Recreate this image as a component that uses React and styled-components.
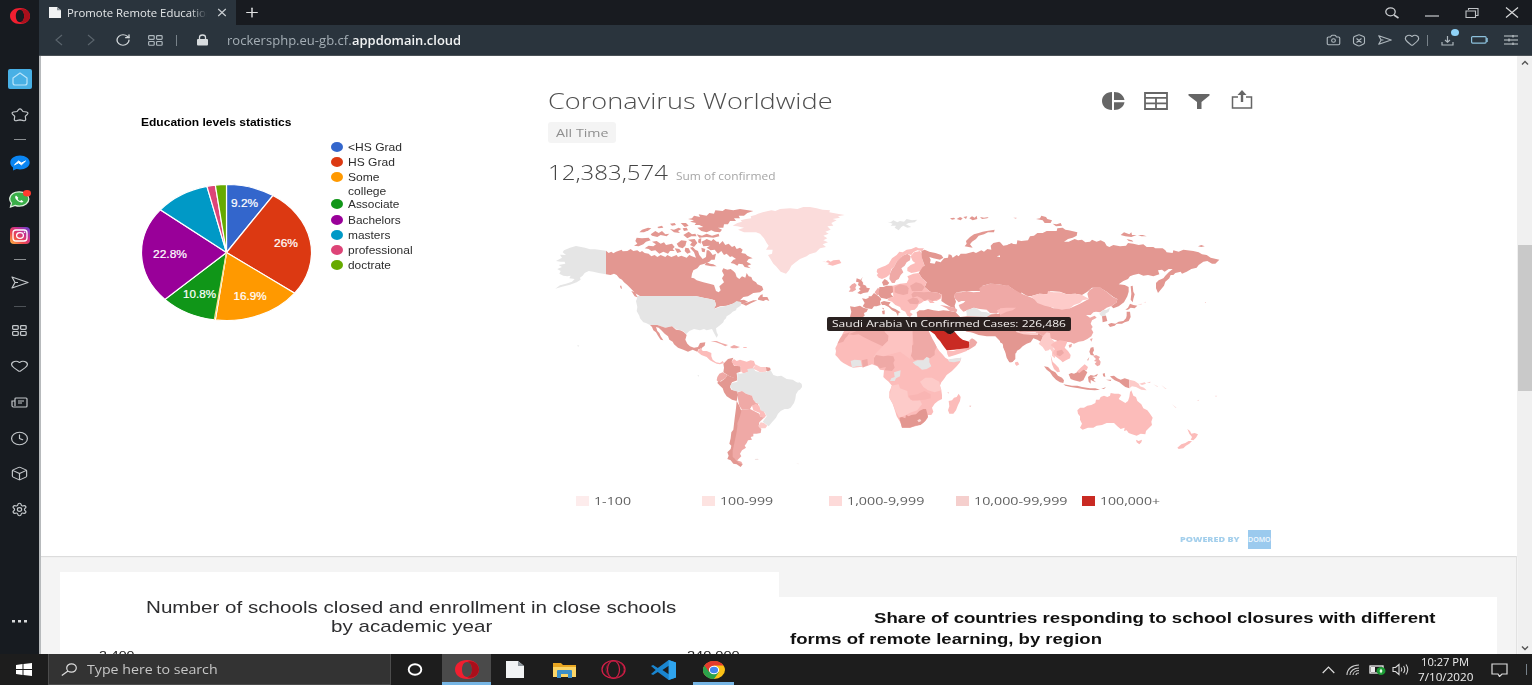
import React, { useLayoutEffect, useRef, useState } from 'react';
import styled, { createGlobalStyle, css } from 'styled-components';
import { X, Plus, RotateCw, Camera, Heart, Clock, Box, Settings } from 'lucide-react';

const Global = createGlobalStyle`
  * { box-sizing: border-box; }
  body { margin: 0; background: #fff; overflow: hidden; }
`;

const ui = '"Open Sans", "Noto Sans", sans-serif';
const arial = '"Liberation Sans", Arial, sans-serif';

/* Text that is condensed or expanded horizontally to fill a given width */
const FitBox = styled.span`
  display: block;
  flex: none;
  width: ${(p) => p.$w}px;
  height: ${(p) => p.$lh || p.$size * 1.3}px;
  line-height: ${(p) => p.$lh || p.$size * 1.3}px;
  font-family: ${(p) => p.$font || ui};
  font-size: ${(p) => p.$size}px;
  font-weight: ${(p) => p.$weight || 400};
  color: ${(p) => p.$color || 'inherit'};
  white-space: pre;
`;
const FitInner = styled.span`
  display: inline-block;
  transform-origin: 0 50%;
`;
function Fit({ w, size, lh, font, weight, color, children }) {
  const ref = useRef(null);
  const [k, setK] = useState(1);
  useLayoutEffect(() => {
    setK(w / ref.current.offsetWidth);
  }, [w, children]);
  return (
    <FitBox $w={w} $size={size} $lh={lh} $font={font} $weight={weight} $color={color}>
      <FitInner ref={ref} style={{ transform: `scaleX(${k})` }}>{children}</FitInner>
    </FitBox>
  );
}

const Screen = styled.div`
  width: 1532px;
  height: 685px;
  display: flex;
  flex-direction: column;
  overflow: hidden;
`;
const Browser = styled.div`
  display: flex;
  height: 654px;
  background: #181b20;
`;
const Side = styled.nav`
  width: 39px;
  height: 654px;
  display: flex;
  flex-direction: column;
  align-items: center;
  background: #171b20;
  color: #c3c7ca;
`;
const SideItem = styled.div`
  width: 39px;
  height: ${(p) => p.$h || 36}px;
  display: flex;
  align-items: center;
  justify-content: center;
  margin-bottom: ${(p) => p.$mb || 0}px;
  margin-top: ${(p) => (p.$push ? 'auto' : 0)};
`;
const Dash = styled.i`
  width: 12px;
  height: 1px;
  background: ${(p) => (p.$dim ? '#4d5257' : '#8b8f92')};
`;
const HomeTile = styled.div`
  width: 24px;
  height: 20px;
  border-radius: 2px;
  background: #48b0e5;
  display: flex;
  align-items: center;
  justify-content: center;
`;
const Column = styled.div`
  flex: 1;
  display: flex;
  flex-direction: column;
`;
const TabBar = styled.div`
  height: 25px;
  display: flex;
  align-items: center;
  background: #181b20;
`;
const Tab = styled.div`
  width: 197px;
  height: 25px;
  padding: 0 7px 0 10px;
  display: flex;
  align-items: center;
  background: #2a343d;
  color: #e4e7e9;
  & > svg { flex: none; }
`;
const TabTitle = styled.div`
  width: 146px;
  margin-left: 6px;
  margin-right: 5px;
  overflow: hidden;
  mask-image: linear-gradient(90deg, #000 86%, transparent 98%);
`;
const Slot = styled.div`
  width: ${(p) => p.$w}px;
  flex: none;
  height: 100%;
  display: flex;
  align-items: center;
  justify-content: center;
  position: relative;
`;
const Spacer = styled.div`flex: 1;`;
const AddressBar = styled.div`
  height: 31px;
  display: flex;
  align-items: center;
  background: #2a343d;
  border-bottom: 1px solid #4a5156;
  color: #aeb7bd;
`;
const Divider = styled.i`
  width: 1px;
  height: 11px;
  background: #78828a;
`;
const UpdateDot = styled.i`
  position: absolute;
  left: 21px;
  top: 4px;
  width: 8px;
  height: 7px;
  border-radius: 50%;
  background: #8fd2f6;
`;
const Url = styled.div`display: flex; margin-left: 7px;`;
const View = styled.div`
  height: 598px;
  display: flex;
  background: #f4f4f4;
  border-left: 2px solid #b7babc;
`;
const Page = styled.main`
  width: 1477px;
  height: 598px;
  overflow: hidden;
`;
const StatsCard = styled.section`
  width: 1476px;
  height: 500px;
  display: flex;
  padding-left: 100px;
  background: #fff;
  box-shadow: 0 1px 1px #dcdcdc;
`;
const Scroll = styled.div`
  width: 14px;
  display: flex;
  flex-direction: column;
  align-items: center;
  background: #f0f0f0;
  padding: 4px 0 3px;
`;
const Thumb = styled.div`
  width: 14px;
  height: 146px;
  margin: 180px 0 auto;
  background: #c9c9c9;
`;
const Education = styled.div`
  width: 407px;
  padding-top: 59px;
`;
const PieRow = styled.div`display: flex; margin-top: 9px;`;
const PieSvg = styled.svg`margin-top: 45px; flex: none;`;
const Legend = styled.div`margin: 1px 0 0 19px;`;
const LegendItem = styled.div`
  display: flex;
  min-height: 15.2px;
  color: #2d2d2d;
`;
const Swatch = styled.i`
  width: 12px;
  height: 10px;
  margin: 2px 5px 0 0;
  border-radius: 50%;
  background: ${(p) => p.$c};
`;
const Corona = styled.div`
  width: 723px;
  padding-top: 31px;
`;
const CoronaHead = styled.div`
  display: flex;
  justify-content: space-between;
  padding-right: 17px;
  height: 35px;
`;
const Tools = styled.div`
  display: flex;
  align-items: center;
  height: 27px;
  gap: 19px;
  color: #666;
`;
const Range = styled.div`
  width: 68px;
  height: 21px;
  padding: 0 8px;
  display: flex;
  align-items: center;
  border-radius: 3px;
  background: #f4f4f4;
`;
const Total = styled.div`
  display: flex;
  align-items: baseline;
  gap: 8px;
  height: 30px;
  margin-top: 15px;
`;
const MapWrap = styled.div`
  position: relative;
  width: 700px;
  height: 280px;
  margin: 7px 0 0 -8px;
`;
const Tooltip = styled.div`
  position: absolute;
  left: 287px;
  top: 122px;
  width: 244px;
  height: 14px;
  padding: 0 0 1px 5px;
  display: flex;
  align-items: center;
  border-radius: 2px;
  background: rgba(35, 27, 26, 0.97);
`;
const MapLegend = styled.div`
  display: flex;
  height: 18px;
  margin: 17px 0 0 27.5px;
`;
const MapKey = styled.div`
  width: 126.7px;
  display: flex;
  align-items: center;
`;
const Square = styled.i`
  width: 13px;
  height: 10px;
  margin-right: 5px;
  background: ${(p) => p.$c};
`;
const Powered = styled.div`
  display: flex;
  justify-content: flex-end;
  align-items: center;
  margin-top: 20px;
  gap: 8px;
`;
const Domo = styled.div`
  width: 23px;
  height: 19px;
  display: flex;
  align-items: center;
  background: #9bcaee;
`;
const Lower = styled.section`
  display: flex;
  align-items: flex-start;
  width: 1476px;
  height: 98px;
  padding: 16px 0 0 19px;
  border-right: 1px solid #e2e2e2;
`;
const Closed = styled.div`
  width: 719px;
  height: 82px;
  padding-top: 26px;
  display: flex;
  flex-direction: column;
  background: #fff;
`;
const Line = styled.div`
  display: flex;
  padding-left: ${(p) => p.$x}px;
  gap: ${(p) => p.$gap || 0}px;
  margin-top: ${(p) => p.$mt || 0}px;
`;
const Share = styled.div`
  width: 718px;
  height: 57px;
  margin-top: 25px;
  padding-top: 11px;
  background: #fff;
`;
const Taskbar = styled.footer`
  height: 31px;
  display: flex;
  background: #1d1d1d;
  color: #eee;
`;
const SearchBox = styled.div`
  width: 343px;
  height: 31px;
  display: flex;
  align-items: center;
  padding-left: 12px;
  gap: 10px;
  background: #333;
  border: 1px solid #4c4c4c;
  border-top: 0;
`;
const TaskItem = styled.div`
  width: ${(p) => p.$w}px;
  height: 31px;
  display: flex;
  align-items: center;
  justify-content: center;
  ${(p) => p.$active && css`background: #4a4a4a;`}
  ${(p) => p.$open && css`box-shadow: inset 0 -3px #76b5e4;`}
`;
const TimeBox = styled.div`
  width: 68px;
  display: flex;
  flex-direction: column;
  align-items: center;
  padding-top: 1px;
`;

const L = ({ as: C, w, h, s = 1.5, ...r }) => (
  <C width={w} height={h} strokeWidth={s} preserveAspectRatio="none" {...r} />
);
const Svg = ({ w, h, vb, children }) => (
  <svg width={w} height={h} viewBox={vb || `0 0 ${w} ${h}`} preserveAspectRatio="none" fill="none">{children}</svg>
);

const OperaMark = ({ w, h }) => (
  <Svg w={w} h={h} vb="0 0 24 20">
    <path fillRule="evenodd" fill="#f01f30" d="M12 0C5 0 0 4.300 0 10s5 10 12 10 12-4.300 12-10S19 0 12 0zm0 2.200c3 0 5 3.300 5 7.800s-2 7.800-5 7.800-5-3.300-5-7.800 2-7.800 5-7.800z" />
    <path fill="#a90f1b" d="M12 2.200c2-1.500 5-1.200 7.600.4C22.300 4.300 24 6.900 24 10s-1.700 5.700-4.400 7.400c-2.600 1.600-5.600 1.900-7.600.4 3 0 5-3.300 5-7.800s-2-7.800-5-7.800z" />
  </Svg>
);
const Grid4 = ({ w, h, s = 1.2 }) => (
  <Svg w={w} h={h} vb="0 0 14 11">
    <g stroke="currentColor" strokeWidth={s}>
      <rect x=".6" y=".6" width="5.200" height="3.800" rx=".8" /><rect x="8" y=".6" width="5.200" height="3.800" rx=".8" />
      <rect x=".6" y="6.500" width="5.200" height="3.800" rx=".8" /><rect x="8" y="6.500" width="5.200" height="3.800" rx=".8" />
    </g>
  </Svg>
);
const PageIcon = ({ w, h }) => (
  <Svg w={w} h={h} vb="0 0 12 12"><path d="M0 0h8l4 3.500V12H0z" fill="#f1f3f4" /><path d="M8 0v3.500h4z" fill="#8d959b" /></Svg>
);
const SendIcon = ({ w, h, s = 1.2 }) => (
  <Svg w={w} h={h} vb="0 0 18 13"><path d="M1 1l16 5.500L1 12l3-5.500zM4 6.500h3" stroke="currentColor" strokeWidth={s} strokeLinejoin="round" /></Svg>
);

const slices = [
  [0, 9.2, '#3366cc'], [9.2, 35.2, '#dc3912'], [35.2, 52.1, '#ff9900'], [52.1, 62.9, '#109618'],
  [62.9, 85.8, '#990099'], [85.8, 96.3, '#0099c6'], [96.3, 97.9, '#dd4477'], [97.9, 100, '#66aa00'],
];
const at = (pct) => {
  const a = (pct / 100) * Math.PI * 2;
  return `${(85.5 + 85 * Math.sin(a)).toFixed(2)} ${(68.5 - 68 * Math.cos(a)).toFixed(2)}`;
};
const pieLabels = [[90, 23, 27, '9.2%'], [133, 63, 24, '26%'], [92.500, 116, 33, '16.9%'], [42, 114, 33, '10.8%'], [12, 73.500, 34, '22.8%']];

function Pie() {
  return (
    <PieSvg width="171" height="137" viewBox="0 0 171 137">
      {slices.map(([a, b, c]) => (
        <path key={c} d={`M85.500 68.500L${at(a)}A85 68 0 0 1 ${at(b)}Z`} fill={c} stroke="#fff" strokeWidth="1.200" />
      ))}
      <path d={`M85.500 68.500L${at(52.3)}`} stroke="#ffdf8a" strokeWidth="1.200" />
      {pieLabels.map(([x, y, w, t]) => (
        <text key={t} x={x} y={y} textLength={w} lengthAdjust="spacingAndGlyphs" fill="#fff" fontFamily="Liberation Sans, sans-serif" fontSize="10.500" stroke="#fff" strokeWidth=".2">{t}</text>
      ))}
    </PieSvg>
  );
}

const R = '#e39791';
const M = '#efa9a6';
const P = '#fcbcba';
const Q = '#fdcbc9';
const F = '#fbdcdb';
const G = '#e5e5e5';

/* Land shapes of the three map sections: colour followed by outline points */
const americas = [
  [G, '198,167 165,163 150,163 135,158 108,153 90,158 72,166 68,172 78,180 60,179 66,188 48,198 62,200 74,200 76,206 56,210 66,216 52,222 62,228 58,236 70,242 82,244 92,242 88,250 104,252 96,260 78,266 60,271 46,281 66,275 90,269 110,262 122,254 120,248 128,242 134,234 146,228 160,230 176,234 198,238'],
  [R, '198,167 206,174 214,170 220,175 228,170 245,164 248,169 262,168 272,162 280,168 292,166 300,172 306,168 314,174 326,176 334,184 344,180 352,186 362,180 376,186 382,180 394,186 410,180 414,186 424,182 440,188 448,180 456,184 468,188 462,172 450,158 458,156 466,164 474,168 478,180 488,192 498,186 500,166 506,166 512,172 518,180 528,176 524,194 514,194 508,200 494,206 480,210 472,220 460,226 456,236 454,248 462,250 470,256 490,262 508,266 522,270 528,288 536,292 542,286 538,274 552,262 546,250 552,240 546,228 550,220 562,224 572,222 580,228 586,234 590,246 598,252 606,244 616,248 620,234 626,244 634,246 638,256 648,262 652,268 666,274 670,284 660,292 640,294 624,304 610,306 600,316 612,314 624,320 606,328 598,320 578,326 560,332 540,334 520,342 528,330 524,316 510,312 490,308 470,304 300,303 288,296 276,284 268,276 262,270 252,262 246,254 238,250 230,240 222,236 212,240 198,238'],
  [R, '606,326 618,332 634,324 652,316 640,316 624,322'], [R, '654,310 662,300 668,298 668,306 682,306 688,318 678,314 670,318 654,314'],
  [R, '274,288 286,292 290,302 296,308 284,304'], [R, '240,272 244,272 246,282 242,280'],
  [R, '484,140 494,136 500,132 514,138 520,132 530,140 536,140 538,148 548,138 556,150 566,146 576,156 584,152 590,162 600,158 608,164 604,174 616,176 622,182 638,190 626,192 620,200 634,208 622,212 632,220 614,216 608,208 596,206 592,212 582,206 572,204 580,194 588,192 576,184 570,186 560,176 552,180 544,168 534,176 524,164 512,166 500,158 510,152 490,154'],
  [R, '494,210 500,202 510,206 520,208 530,214 514,214'], [R, '528,156 546,152 554,160 540,166'],
  [R, '314,160 326,152 340,154 348,148 336,140 350,138 362,146 372,142 378,150 396,146 404,156 398,162 404,168 390,168 384,176 370,170 358,176 346,166 334,168 326,162'],
  [R, '282,152 292,146 286,138 290,128 306,130 326,128 332,136 318,140 310,148 296,154'],
  [R, '410,146 424,136 440,138 436,152 428,160 416,156'], [R, '444,134 464,132 472,144 462,156 450,150 456,142'], [R, '476,132 484,130 482,146 474,142'],
  [R, '404,160 418,162 424,170 412,174'], [R, '436,158 446,160 452,172 442,176 434,168'], [R, '484,158 496,162 494,172 486,170'],
  [R, '298,112 306,104 324,98 334,100 326,106 312,112'], [R, '332,118 346,108 356,114 366,108 376,118 388,116 380,124 362,120 352,126 336,122'],
  [R, '352,96 366,92 370,98 356,100'], [R, '390,86 404,84 408,90 396,92'], [R, '390,102 402,104 416,98 424,102 414,108 420,114 402,112'],
  [R, '422,84 438,84 446,92 434,96'], [R, '428,100 440,98 444,106 432,108'], [R, '430,120 446,110 456,118 466,116 470,124 454,124 442,130'],
  [R, '470,118 486,122 500,116 516,122 536,116 538,124 520,128 500,126 478,128'],
  [R, '444,72 456,70 462,62 480,66 476,58 500,62 508,54 522,56 526,46 548,48 556,42 580,46 600,42 640,48 622,54 612,62 596,62 600,70 582,70 588,78 570,78 564,88 552,88 550,98 534,98 546,104 540,112 524,110 514,106 500,112 484,108 472,98 490,96 478,90 464,90 468,84 450,80 462,76'],
  [F, '592,84 606,80 602,76 618,72 634,70 632,64 646,60 654,56 668,52 694,46 706,48 720,42 750,40 772,42 790,36 810,36 830,40 848,44 870,46 868,52 892,56 914,60 894,64 900,68 878,72 890,76 874,84 880,92 862,94 872,104 856,110 866,116 850,122 862,130 850,136 864,142 848,148 858,156 840,160 828,172 808,178 800,184 780,192 764,204 754,212 748,224 738,236 722,230 708,214 700,206 690,190 684,180 696,176 698,164 678,164 686,152 680,144 672,130 660,116 648,112 630,112 612,112 594,104 612,98 592,94 578,92'],
  [G, '294,303 455,303 470,304 490,308 510,312 524,316 528,330 522,342 540,336 560,332 578,326 590,318 604,322 602,332 590,340 588,346 578,350 570,358 560,364 558,370 552,376 550,382 538,392 528,400 530,412 534,420 530,428 522,414 516,402 500,406 492,402 480,406 462,402 448,408 438,418 430,408 420,406 408,402 396,394 376,398 352,390 330,390 318,384 310,382 300,370 298,362 290,348 292,336 288,318'],
  [R, '330,390 352,390 376,398 396,394 408,404 420,406 430,410 440,420 436,434 442,446 450,454 462,458 474,456 480,444 496,442 494,452 486,458 484,462 476,462 472,470 458,464 444,470 430,464 414,458 402,448 398,440 388,434 384,424 374,416 364,406 356,398 348,396 352,408 358,414 362,424 370,436 362,434 354,422 348,412 340,406 336,396'],
  [P, '472,470 482,458 488,468 500,468 514,474 514,484 518,494 528,502 540,504 548,498 552,504 540,508 530,506 518,500 510,496 500,486 484,480'],
  [M, '512,438 530,438 544,444 552,446 564,450 556,454 544,448 528,442'], [M, '570,456 582,450 592,454 600,456 590,460 576,460'], [P, '610,456 620,456 620,459 610,459'],
  [R, '550,506 556,500 564,492 580,488 576,498 582,512 602,514 602,530 590,534 592,552 574,546 566,542 550,532 552,518'],
  [P, '574,500 582,492 590,498 600,494 620,500 632,496 642,498 646,510 640,516 642,522 628,522 624,530 612,536 604,530 602,514 584,512'],
  [Q, '646,508 662,516 678,516 678,530 660,532 650,526 640,522'], [R, '678,516 690,518 692,524 686,530 679,528'],
  [M, '532,546 538,536 548,532 562,540 556,550 542,558 540,566 530,556'],
  [R, '562,540 574,546 590,548 592,556 576,562 570,576 574,584 592,588 594,600 590,618 576,614 560,604 552,592 548,580 540,572 532,564 534,560 542,560 556,550'],
  [G, '592,534 600,536 612,534 624,530 622,522 640,520 646,528 660,532 680,530 692,526 700,540 712,544 724,542 740,552 758,554 770,562 784,566 786,576 774,588 768,598 766,612 762,624 752,638 744,642 734,642 722,648 714,656 708,668 696,682 686,694 676,686 668,680 680,664 674,652 662,648 660,636 656,626 646,622 640,614 636,602 618,596 606,588 594,590 578,586 570,574 576,564 592,560'],
  [M, '594,592 606,588 618,596 636,602 640,614 648,624 656,626 652,632 636,632 630,642 606,644 598,632 594,612'],
  [P, '636,632 648,626 658,632 662,646 672,650 678,662 672,670 658,662 660,654 640,646'],
  [M, '604,644 630,642 658,656 660,664 672,668 658,682 656,694 664,702 662,714 650,716 640,716 640,724 632,726 636,734 624,736 620,744 614,752 618,758 606,766 600,776 604,784 592,796 574,790 576,768 582,740 588,708 594,676 598,656'],
  [R, '590,618 598,632 604,648 600,664 594,680 590,710 584,740 578,768 578,786 590,796 596,800 608,808 602,816 590,808 580,806 572,796 562,792 566,782 562,772 572,762 574,752 568,746 572,730 574,712 580,704 584,670 588,640'],
  [Q, '656,692 662,682 672,684 682,692 676,700 660,700'],
  [M, '590,796 604,800 608,808 596,804'],
  ['#f3e3e2', '644,792 654,791 656,795 646,795'], [G, '112,450 118,452 114,455'], [G, '472,541 477,541 476,545'], ['#f3e3e2', '768,804 776,806 776,808'],
];
const centre = [
  [G, '262,80 272,82 280,76 292,82 300,78 312,80 320,72 336,76 352,74 344,82 326,84 318,88 334,96 322,98 310,92 304,96 296,106 284,98 288,92 272,92 278,86'],
  [P, '66,198 76,202 84,196 92,200 100,196 118,194 124,204 112,208 98,212 82,208 88,204'],
  [P, '230,240 234,236 230,230 232,222 246,216 256,212 266,206 276,190 290,180 298,170 308,172 320,164 334,162 348,156 356,160 372,160 366,168 352,166 340,172 334,180 320,176 306,184 300,192 290,200 282,216 274,222 270,238 260,246 246,252 236,248'],
  [M, '268,252 270,236 276,222 282,216 290,200 302,188 308,182 322,176 332,184 330,196 320,202 314,212 304,220 310,232 302,240 296,252 288,256 284,264 276,264'],
  [P, '332,184 342,172 360,168 366,176 366,190 374,214 362,228 346,232 334,234 322,228 322,218 332,210 346,204 338,198'],
  [R, '364,168 374,164 388,170 406,174 424,180 430,188 420,194 400,190 388,186 392,194 390,204 404,206 408,198 422,202 432,190 444,188 446,178 454,180 458,188 470,180 476,184 482,176 498,176 520,170 528,174 544,166 552,170 562,162 574,164 572,152 580,144 598,140 604,146 602,158 608,166 604,180 590,184 606,188 614,180 614,164 622,172 632,182 638,176 626,164 640,164 636,152 622,150 632,146 650,148 652,140 664,142 664,300 630,276 600,268 570,266 548,272 540,288 500,288 470,292 462,302 468,320 464,332 466,340 452,336 436,326 424,318 426,300 416,294 390,290 374,276 380,262 366,250 356,234 368,216 374,212 366,190'],
  [R, '494,154 500,146 498,138 510,126 522,118 536,114 548,110 560,108 584,104 582,112 564,112 552,118 536,122 528,132 516,140 510,148 518,158 506,156'],
  [R, '450,70 462,68 466,72 456,74'], [R, '470,72 480,66 488,70 482,76'], [R, '490,66 502,64 498,72'], [R, '508,70 516,64 524,68 530,62 532,72 518,76'], [R, '540,66 552,68 566,66 562,70 546,72'], [M, '640,68 650,68 648,71'],
  [R, '170,250 182,254 188,246 184,256 190,264 188,268 198,272 200,278 210,280 204,292 190,294 182,298 172,294 182,286 176,282 182,276 174,270 176,262 168,260'],
  [M, '148,276 156,268 164,264 170,270 166,278 168,284 158,290 146,290 152,282'],
  [R, '150,334 164,336 180,332 190,338 204,342 200,350 192,354 194,362 184,370 168,374 156,370 150,366 154,350'],
  [R, '186,310 198,312 206,308 206,304 214,304 222,294 236,304 244,312 240,320 242,330 230,334 222,334 216,342 198,340 188,334 194,324'],
  [M, '224,292 234,278 240,284 236,300 230,300'],
  [R, '238,276 250,276 260,272 278,272 282,290 272,296 280,306 260,312 242,308 236,300'], [R, '246,262 254,252 260,256 268,264 262,270 250,272'],
  [R, '242,322 252,318 262,320 272,322 266,330 276,338 286,342 302,352 296,354 294,364 288,352 276,346 266,336 254,330 246,330'], [R, '246,338 252,340 250,344'], [R, '246,348 254,346 254,358 248,358'],
  [P, '278,272 300,266 320,264 326,252 322,244 340,236 356,234 366,250 380,262 374,276 390,290 416,294 426,300 424,310 410,318 398,318 404,324 390,324 384,316 372,318 364,324 356,328 352,336 344,344 332,346 330,352 338,358 330,366 322,362 316,350 304,344 300,336 286,330 276,320 262,316 268,308 280,306'],
  [M, '284,276 300,268 320,272 326,280 324,296 310,300 294,296 284,292'], [M, '334,298 342,290 372,292 390,290 416,294 424,302 418,312 404,316 398,318 384,312 374,318 364,310 352,304 338,308'],
  [M, '322,316 338,308 352,310 358,320 352,328 330,326'], [M, '330,272 348,262 364,266 374,276 366,288 336,288'],
  [R, '350,352 358,346 372,346 384,342 400,346 416,348 430,346 450,348 466,352 480,366 352,366'],
  [M, '420,330 436,332 452,336 464,338 472,344 468,354 462,350 450,348 440,340'],
  [M, '464,310 462,300 470,292 484,292 500,288 520,292 540,290 538,280 548,272 570,266 600,268 630,276 664,296 664,340 640,336 620,340 600,346 590,356 570,354 560,344 540,342 520,338 508,344 490,350 480,340 476,330 490,324 496,318 484,318 476,322'],
  [G, '498,346 510,342 524,338 536,344 544,350 560,352 574,358 566,368 500,368 500,356'],
  [P, '590,346 610,338 650,336 660,344 620,356 600,360'],
  [R, '466,352 480,366 500,364 560,366 574,358 600,356 664,362 664,440 650,446 648,458 650,472 642,478 644,492 636,502 628,502 620,488 616,472 610,458 608,444 602,440 594,432 586,424 560,424 536,420 520,414 512,412 500,410 480,398 380,396 380,366'],
  [P, '130,412 134,406 150,398 160,396 200,388 250,386 262,400 300,406 320,402 340,404 384,404 396,430 404,444 410,456 418,468 426,476 436,488 446,494 460,492 484,488 480,502 470,514 456,528 440,540 432,552 424,562 420,572 424,586 426,600 426,612 414,618 404,626 396,638 400,650 394,660 384,660 382,670 370,684 352,692 330,698 306,698 302,684 290,664 284,644 278,626 268,608 268,590 276,572 266,560 256,552 250,546 252,526 240,524 232,514 216,508 200,514 180,516 160,518 148,514 130,504 122,498 112,486 106,480 108,468 106,460 112,448 122,428'],
  [M, '112,446 120,430 130,418 150,412 142,424 136,430 130,440 118,444'],
  [M, '146,418 170,408 184,398 250,388 254,410 266,422 264,438 248,454 232,446 214,438 190,426 176,418 160,420'],
  [M, '338,408 384,404 396,430 404,444 410,456 404,468 404,480 390,490 380,486 370,494 350,494 342,496 336,486 328,478 330,460 340,448'],
  ['#fdc3c1', '254,410 266,422 264,438 248,454 228,474 220,486 250,484 300,470 330,492 336,470 336,410'],
  [M, '222,490 228,480 250,484 264,482 280,484 284,496 280,504 284,518 276,528 254,526 258,516 240,520 232,512 222,508'],
  [M, '186,496 202,492 204,510 188,518'],
  [G, '152,498 164,494 182,496 186,514 170,514 156,518'], [G, '338,502 352,496 370,496 380,486 388,490 388,502 394,514 380,522 366,524 354,514 346,510'],
  [G, '444,496 452,492 484,488 480,498 462,502 448,500'], [G, '282,532 302,526 300,544 288,550 284,558 270,558 274,550 284,546'],
  [Q, '360,560 376,548 396,548 418,560 420,572 424,586 404,592 384,586 370,576'],
  [Q, '274,572 296,568 300,580 322,588 324,606 338,618 360,616 366,628 352,646 334,652 318,660 298,668 288,650 278,626 268,608'],
  ['#f9b5b3', '326,602 352,598 374,588 392,598 392,610 374,614 352,616 332,614'],
  [R, '298,668 306,666 316,670 318,660 326,664 334,660 348,658 358,648 370,642 378,642 382,656 384,666 376,678 362,690 346,692 330,698 306,698 302,684'], ['#fdd8d6', '352,676 360,672 364,678 356,682'],
  [P, '446,618 456,616 462,608 470,606 476,596 482,606 480,618 474,630 468,646 460,656 448,656 444,646 448,634'],
  [P, '440,466 460,468 478,462 496,456 506,460 500,468 484,474 466,480 446,486 442,478'],
  [M, '508,436 516,430 524,434 532,442 526,452 514,460 504,466 494,462 506,456 510,446'],
  ['#c92a23', '390,408 432,406 450,418 464,410 472,420 480,428 488,434 508,440 508,450 506,458 480,462 462,464 440,466 434,458 428,450 420,438 412,430 404,418'],
  ['#241514', '424,404 466,404 462,412 452,418 444,416 436,410'],
  [G, '-4,560 4,566 6,574 0,584 -4,584'], [P, '442,592 446,592 446,596'], [M, '508,632 514,632 510,636'], [P, '646,502 654,500 656,508 650,512 646,508'],
];
const asia = [
  [R, '0,142 10,152 22,150 36,144 40,150 50,150 52,136 64,138 84,136 90,124 102,122 112,114 128,114 140,108 170,108 172,100 188,98 196,104 206,106 216,108 232,112 230,122 218,128 204,132 192,140 206,140 224,132 234,136 246,134 256,142 270,140 276,134 290,140 302,136 314,142 320,152 328,156 340,150 360,154 378,152 384,144 400,146 416,150 430,148 440,156 460,156 466,160 488,160 496,166 500,172 518,174 520,166 536,170 550,164 580,168 596,172 606,178 620,180 632,188 658,194 646,206 636,206 622,198 610,200 596,210 590,218 574,222 560,230 546,236 542,230 526,234 520,240 512,240 508,250 496,260 492,272 484,282 474,294 468,280 468,264 476,256 490,250 496,242 506,232 518,222 506,222 494,230 486,224 474,226 478,238 460,244 444,240 430,242 416,236 400,240 390,244 384,252 370,258 356,268 374,270 386,276 386,290 382,304 372,322 356,334 340,340 334,334 350,322 352,312 340,306 320,290 300,278 276,278 262,290 246,300 226,296 200,298 180,290 150,288 142,298 118,296 92,304 80,302 60,290 30,272 0,268'],
  [R, '108,72 120,70 124,62 138,66 142,72 156,76 152,84 134,84 128,76'], [R, '158,86 170,88 182,84 186,92 168,94'],
  [R, '362,120 372,112 388,118 394,112 396,120 410,120 394,126 376,124'], [R, '414,120 428,120 440,124 424,124'], [R, '380,132 396,136 400,140 386,138'], [R, '594,154 604,150 614,154 604,156'],
  [M, '0,272 26,270 34,282 50,290 84,304 96,308 120,320 160,340 210,340 240,326 266,312 262,296 268,286 280,278 300,276 310,284 320,290 338,306 352,312 350,322 336,332 320,338 310,346 300,352 288,350 280,352 272,360 258,360 270,368 284,362 290,368 276,376 272,386 278,396 274,402 280,412 274,424 262,432 250,438 236,440 222,446 212,442 196,440 180,442 168,436 150,430 130,424 110,412 60,410 0,410'],
  [Q, '92,304 118,296 142,298 144,288 160,292 180,292 200,298 226,296 246,300 268,312 248,316 240,324 222,330 210,340 186,344 160,338 134,332 112,324 104,314'],
  [P, '0,340 20,338 48,338 38,346 20,350 0,360'],
  [R, '0,380 30,392 40,406 70,410 96,420 110,412 130,424 122,440 112,434 100,430 92,442 80,446 68,454 60,462 50,468 46,476 46,492 38,500 30,502 22,488 18,474 12,460 8,446 0,442'],
  [Q, '40,398 60,410 84,412 114,414 114,420 96,420 70,418 50,412'],
  [G, '298,356 308,346 320,344 330,338 326,350 316,356 318,364 304,364'], [R, '306,364 318,362 322,378 308,382'],
  [R, '324,388 334,384 346,386 356,380 370,378 378,370 380,362 380,350 390,350 392,366 386,378 374,382 366,386 350,386 344,392 330,396'], [R, '376,344 384,338 390,326 400,330 412,332 404,340 392,338 384,344'],
  [R, '392,274 398,272 400,290 404,298 400,312 398,322 392,314 394,296'], [P, '412,330 424,326 426,328'], [P, '430,324 438,320 438,322'],
  [Q, '116,446 124,436 128,424 140,412 150,414 152,430 164,440 156,450 162,464 168,476 164,490 156,482 156,470 150,462 146,466 136,468 128,456'],
  [P, '152,450 164,440 180,436 194,438 202,440 198,450 194,458 204,468 212,480 210,490 198,496 188,502 182,496 174,490 164,482 158,474 164,462'],
  [P, '152,480 158,500 166,508 176,518 180,530 172,532 162,522 156,508 154,496'], [P, '44,504 50,500 58,508 50,512'],
  [M, '170,468 186,464 192,474 180,484 170,480'],
  [R, '132,514 144,516 154,526 166,532 174,542 186,548 192,556 190,564 180,562 168,554 158,544 150,532 140,524'],
  [R, '190,568 204,570 216,572 232,572 246,576 270,580 286,580 300,584 284,586 262,584 236,580 212,576 196,572'], [R, '304,582 318,576 312,582'],
  [R, '206,538 214,534 222,536 234,530 248,520 262,532 256,544 250,556 240,560 222,556 212,552'], [P, '230,530 242,518 254,508 264,516 260,526 250,524 238,534'],
  [R, '264,546 272,540 282,542 294,536 290,544 276,546 286,550 280,554 288,562 278,558 272,554 272,566 266,560'],
  [R, '272,458 280,456 282,466 278,474 284,482 272,480 268,470'], [M, '280,484 288,480 300,486 296,492 302,500 300,510 292,514 284,506 290,500 282,498 288,492'], [R, '262,494 268,486 264,498'],
  [R, '330,544 342,542 352,550 362,554 374,550 388,554 388,580 376,576 368,570 358,562 344,556 336,550'], [Q, '388,554 404,558 416,566 420,574 432,578 440,586 424,584 408,576 396,574 388,580'], [Q, '418,566 434,562 438,566 426,570'],
  [R, '308,536 314,534 316,546 310,544'], [R, '318,554 334,554 332,558'], [M, '270,432 278,430 274,440'], [M, '206,450 216,446 214,456 208,458'],
  [P, '232,646 240,638 252,638 262,632 274,630 286,624 288,614 298,614 302,606 312,602 322,606 330,602 332,594 344,596 356,596 364,600 356,612 366,618 376,624 384,618 388,606 390,592 394,586 400,602 408,606 412,618 424,628 430,640 442,646 450,656 458,668 454,680 456,690 446,700 438,708 436,718 422,716 410,722 396,718 386,714 380,706 372,708 374,698 362,702 352,694 342,684 320,684 306,690 290,692 280,698 264,698 248,704 240,698 246,686 240,674 240,664 234,656'],
  [P, '408,734 416,738 426,734 424,742 418,748 410,742'],
  [P, '562,702 570,708 574,716 584,714 594,718 588,728 580,736 572,734 576,726 568,716'], [P, '566,738 576,738 568,746 558,752 550,760 536,762 532,758 544,748 556,744'],
  [Q, '440,562 452,560 450,564'], [F, '460,568 474,574 472,576'], [F, '484,570 500,582 496,582'], [F, '516,628 530,638 526,638'], [F, '590,616 598,614 596,618'], [F, '644,602 652,602 648,606'], [M, '614,322 618,322 618,324'],
];

const sections = [[0, americas], [780, centre], [1380, asia]];

function WorldMap() {
  return (
    <svg width="700" height="280" viewBox="0 0 2100 840">
      {sections.map(([dx, list]) => (
        <g key={dx} transform={`translate(${dx} 0)`}>
          {list.map(([c, pts], i) => <polygon key={i} points={pts} fill={c} />)}
        </g>
      ))}
    </svg>
  );
}

const pieLegend = [
  ['#3366cc', ['<HS Grad', 54]], ['#dc3912', ['HS Grad', 47]], ['#ff9900', ['Some', 31], ['college', 38]], ['#109618', ['Associate', 52]],
  ['#990099', ['Bachelors', 53]], ['#0099c6', ['masters', 42]], ['#dd4477', ['professional', 65]], ['#66aa00', ['doctrate', 43]],
];
const mapKeys = [['#fdecec', '1-100', 37], ['#fde3e1', '100-999', 53], ['#fddad9', '1,000-9,999', 77], ['#f5cfcd', '10,000-99,999', 93], ['#c92a23', '100,000+', 60]];

function Sidebar() {
  return (
    <Side>
      <SideItem $h={32} $mb={29}><OperaMark w={20} h={16} /></SideItem>
      <SideItem><HomeTile><Svg w={16} h={14}><path d="M1 6l7-5 7 5v5q0 2-2 2H3q-2 0-2-2z" stroke="#b9e4fa" strokeWidth="1.200" strokeLinejoin="round" /></Svg></HomeTile></SideItem>
      <SideItem><Svg w={18} h={14}><path d="M7.300 1.800q1.700-1.800 3.400 0l1.300 1.700 3.600.5q2 .6.900 2.100l-2.200 2.100.4 3.200q-.2 1.600-2.200 1.300L9 11.900l-3.500.8q-2 .3-2.200-1.300l.4-3.200-2.200-2.100Q.4 4.600 2.400 4L6 3.500z" stroke="currentColor" strokeWidth="1.200" /></Svg></SideItem>
      <SideItem $h={12}><Dash /></SideItem>
      <SideItem>
        <Svg w={20} h={16}><path d="M10 .5c5.500 0 9.700 3 9.700 7s-4.200 7-9.700 7c-1.200 0-2.400-.1-3.400-.4L3 15.500v-3C1.200 11.200.3 9.500.3 7.500c0-4 4.200-7 9.700-7z" fill="#0a85f2" /><path d="M4.500 9.800L8.500 6l3 2 4-2-4 3.800-3-2z" fill="#fff" stroke="#fff" /></Svg>
      </SideItem>
      <SideItem>
        <Svg w={22} h={18}>
          <path d="M1.500 17l1-4C1 11.500.6 9.500.8 8 1.500 4.500 5 1.800 10.300 1.800s9.500 3.200 9.500 7.200-4 7.200-9.500 7.200c-1.500 0-3-.3-4.200-.8z" fill="#3aae49" stroke="#dff0df" strokeWidth="1.300" />
          <path d="M7 5.500c-1.500 1-1 3 1 4.800 2.200 2 5 3 6.500 1.400l-2-1.600-1.400.8c-1.200-.4-2-1.200-2.500-2l.7-1.200z" fill="#fff" /><ellipse cx="18" cy="3.200" rx="4" ry="3.200" fill="#ff3b2f" />
        </Svg>
      </SideItem>
      <SideItem>
        <Svg w={20} h={17}>
          <defs><linearGradient id="ig" x1="0" y1="1" x2="1" y2="0"><stop offset="0" stopColor="#fdbb45" /><stop offset=".35" stopColor="#ee4a4c" /><stop offset=".65" stopColor="#c82f8f" /><stop offset="1" stopColor="#5a46d6" /></linearGradient></defs>
          <rect width="20" height="17" rx="4" fill="url(#ig)" /><rect x="3" y="3" width="14" height="11" rx="3" stroke="#fff" strokeWidth="1.300" /><ellipse cx="10" cy="8.500" rx="3.400" ry="2.800" stroke="#fff" strokeWidth="1.300" /><circle cx="14.500" cy="5.300" r=".8" fill="#fff" />
        </Svg>
      </SideItem>
      <SideItem $h={12}><Dash /></SideItem>
      <SideItem $h={35}><SendIcon w={18} h={13} /></SideItem>
      <SideItem $h={12}><Dash $dim /></SideItem>
      <SideItem><Grid4 w={15} h={11} /></SideItem>
      <SideItem><L as={Heart} w={19} h={14} s={1.6} /></SideItem>
      <SideItem><Svg w={17} h={11}><path d="M4 9V1.800Q4 1 5 1h10q1 0 1 1v7q0 1-1 1H2.500Q1 10 1 8.500V4h3M7 4h6M7 6h4" stroke="currentColor" strokeWidth="1.200" /></Svg></SideItem>
      <SideItem><L as={Clock} w={19} h={15} s={1.5} /></SideItem>
      <SideItem $h={35}><L as={Box} w={19} h={15} s={1.5} /></SideItem>
      <SideItem><L as={Settings} w={17} h={15} s={1.7} /></SideItem>
      <SideItem $push $mb={15}><Svg w={15} h={3}><path d="M0 0h3v2.500H0zM6 0h3v2.500H6zM12 0h3v2.500h-3z" fill="#d7d9da" /></Svg></SideItem>
    </Side>
  );
}

function Chrome() {
  return (
    <>
      <TabBar>
        <Tab>
          <PageIcon w={12} h={11} />
          <TabTitle><Fit w={146} size={10.5} lh={20} weight={500}>Promote Remote Education</Fit></TabTitle>
          <L as={X} w={14} h={13} s={2} color="#c7ccd0" />
        </Tab>
        <Slot $w={31}><L as={Plus} w={18} h={15} s={1.9} color="#e0e2e3" /></Slot>
        <Spacer />
        <Slot $w={38}><Svg w={14} h={12}><ellipse cx="5.500" cy="4.800" rx="4.700" ry="4" stroke="#c9cccf" strokeWidth="1.300" /><path d="M9 8l4.500 3" stroke="#c9cccf" strokeWidth="1.600" /></Svg></Slot>
        <Slot $w={41}><Svg w={14} h={9}><path d="M0 8h14" stroke="#c9cccf" strokeWidth="1.200" /></Svg></Slot>
        <Slot $w={39}><Svg w={14} h={12}><path d="M3.500 3V1.500h9.500v7h-2.500M1 4h9.500v6.500H1z" stroke="#c0c3c6" strokeWidth="1.100" /></Svg></Slot>
        <Slot $w={41}><Svg w={14} h={11}><path d="M1 .5l12 10M13 .5L1 10.500" stroke="#d7d9da" strokeWidth="1.200" /></Svg></Slot>
      </TabBar>
      <AddressBar>
        <Slot $w={40}><Svg w={8} h={12}><path d="M7 1L1 6l6 5" stroke="#5b656d" strokeWidth="1.100" /></Svg></Slot>
        <Slot $w={24}><Svg w={8} h={12}><path d="M1 1l6 5-6 5" stroke="#5b656d" strokeWidth="1.100" /></Svg></Slot>
        <Slot $w={40}><L as={RotateCw} w={16} h={14} s={2} color="#d3d8db" /></Slot>
        <Slot $w={24}><Grid4 w={15} h={11} s={1.1} /></Slot>
        <Slot $w={18}><Divider /></Slot>
        <Slot $w={35}><Svg w={11} h={12}><path d="M2.500 6V3.500C2.500 1.800 3.800 1 5.500 1s3 .8 3 2.500V6" stroke="#d8dcdf" strokeWidth="1.300" /><rect y="5" width="11" height="6.500" rx="1" fill="#d8dcdf" /></Svg></Slot>
        <Url>
          <Fit w={125} size={12} lh={21} color="#a5afb6">rockersphp.eu-gb.cf.</Fit>
          <Fit w={109} size={12} lh={21} weight={600} color="#f1f3f4">appdomain.cloud</Fit>
        </Url>
        <Spacer />
        <Slot $w={26}><L as={Camera} w={15} h={14} s={1.8} /></Slot>
        <Slot $w={26}><Svg w={14} h={13}><path d="M5.500 1.200Q7 .4 8.500 1.200l3 1.300q1 .5 1 1.500v4.500q0 1-1 1.500l-3 1.600q-1.500.7-3 0L2.500 10q-1-.5-1-1.500V4q0-1 1-1.500zM4.500 4.500l5 4M9.500 4.500l-5 4" stroke="currentColor" strokeWidth="1.100" /></Svg></Slot>
        <Slot $w={26}><SendIcon w={14} h={10} s={1.5} /></Slot>
        <Slot $w={27}><L as={Heart} w={16} h={14} s={1.8} /></Slot>
        <Slot $w={5}><Divider /></Slot>
        <Slot $w={34}><Svg w={13} h={11}><path d="M1 7v3h11V7M6.500 1v6M4 5l2.500 2.300L9 5" stroke="currentColor" strokeWidth="1.200" /></Svg><UpdateDot /></Slot>
        <Slot $w={30}><Svg w={17} h={8}><rect x=".6" y=".6" width="14.500" height="6.500" rx="1" stroke="#8cc0dc" strokeWidth="1.200" /><path d="M16 2v4" stroke="#8cc0dc" strokeWidth="1.500" /></Svg></Slot>
        <Slot $w={34}><Svg w={14} h={10}><path d="M0 1h14M0 5h14M0 9h14M9 0v2.500M5 3.500v3M9 7.500V10" stroke="#c6cdd1" strokeWidth="1.100" /></Svg></Slot>
        <Slot $w={4} />
      </AddressBar>
    </>
  );
}

function Content() {
  return (
    <Page>
      <StatsCard>
        <Education>
          <Fit w={150} size={10.5} lh={15} font={arial} weight={700} color="#000">Education levels statistics</Fit>
          <PieRow>
            <Pie />
            <Legend>
              {pieLegend.map(([c, ...lines]) => (
                <LegendItem key={c}>
                  <Swatch $c={c} />
                  <div>{lines.map(([t, w], i) => <Fit key={t} w={w} size={10.5} lh={lines.length > 1 ? (i ? 12 : 15) : 15.2} font={arial}>{t}</Fit>)}</div>
                </LegendItem>
              ))}
            </Legend>
          </PieRow>
        </Education>
        <Corona>
          <CoronaHead>
            <Fit w={284} size={22} lh={26} weight={300} color="#4e4e4e">Coronavirus Worldwide</Fit>
            <Tools>
              <Svg w={24} h={20}><path d="M11 1v18C5 19 1 15 1 10s4-9 10-9zM13 1c6 0 9.500 3.500 10.500 8H13zM13 11.300h10.500C22.500 16 19 19 13 19z" fill="currentColor" /></Svg>
              <Svg w={24} h={18}><path d="M1 1h22v16H1zM1 5.800h22M1 11.300h22M12 5.500V17" stroke="currentColor" strokeWidth="1.800" /></Svg>
              <Svg w={24} h={16}><path d="M1.500 1h21v1.500L14.500 9v7H10V9L1.500 2.500z" fill="currentColor" /></Svg>
              <Svg w={24} h={21}><path d="M8 7H2.500v11h19V7H16" stroke="currentColor" strokeWidth="1.500" /><path d="M12 12V3" stroke="currentColor" strokeWidth="2.400" /><path d="M7.500 5L12 0l4.500 5z" fill="currentColor" /></Svg>
            </Tools>
          </CoronaHead>
          <Range><Fit w={52} size={11.5} lh={20} color="#8f8f8f">All Time</Fit></Range>
          <Total>
            <Fit w={120} size={20} lh={30} weight={300} color="#444">12,383,574</Fit>
            <Fit w={100} size={10.5} lh={15} color="#a6a6a6">Sum of confirmed</Fit>
          </Total>
          <MapWrap>
            <WorldMap />
            <Tooltip><Fit w={234} size={9.5} lh={12} weight={500} color="#f4f0ef">{'Saudi Arabia \\n Confirmed Cases: 226,486'}</Fit></Tooltip>
          </MapWrap>
          <MapLegend>
            {mapKeys.map(([c, t, w]) => <MapKey key={t}><Square $c={c} /><Fit w={w} size={11.5} lh={16} color="#626262">{t}</Fit></MapKey>)}
          </MapLegend>
          <Powered>
            <Fit w={60} size={6.5} lh={9} weight={800} color="#a3cfec">POWERED BY</Fit>
            <Domo><Fit w={23} size={7} lh={10} weight={600} color="#f2f9fe">DOMO</Fit></Domo>
          </Powered>
        </Corona>
      </StatsCard>
      <Lower>
        <Closed>
          <Line $x={86}><Fit w={531} size={17} lh={19} font={arial} color="#2e2e30">Number of schools closed and enrollment in close schools</Fit></Line>
          <Line $x={271}><Fit w={161} size={17} lh={19} font={arial} color="#2e2e30">by academic year</Fit></Line>
          <Line $x={39} $gap={552} $mt={12}>
            <Fit w={36} size={11} lh={14} font={arial} color="#222">2,400</Fit>
            <Fit w={53} size={11} lh={14} font={arial} color="#222">240,000</Fit>
          </Line>
        </Closed>
        <Share>
          <Line $x={95}><Fit w={562} size={15.5} lh={20} font={arial} weight={700} color="#111">Share of countries responding to school closures with different</Fit></Line>
          <Line $x={11}><Fit w={312} size={15.5} lh={21} font={arial} weight={700} color="#111">forms of remote learning, by region</Fit></Line>
        </Share>
      </Lower>
    </Page>
  );
}

function WindowsBar() {
  return (
    <Taskbar>
      <TaskItem $w={48}><Svg w={16} h={13}><path d="M0 2l6.500-1v5H0zM7.500.9L16 0v6H7.500zM0 7h6.500v5L0 11zM7.500 7H16v6l-8.500-1z" fill="#fff" /></Svg></TaskItem>
      <SearchBox>
        <Svg w={16} h={13}><ellipse cx="10.500" cy="5" rx="4.800" ry="4.200" stroke="#ddd" strokeWidth="1.200" /><path d="M7 8L.8 12.500" stroke="#ddd" strokeWidth="1.300" /></Svg>
        <Fit w={131} size={13} lh={20} color="#c6c6c6">Type here to search</Fit>
      </SearchBox>
      <TaskItem $w={47}><Svg w={16} h={13}><ellipse cx="8" cy="6.500" rx="6.300" ry="5.300" stroke="#fff" strokeWidth="1.900" /></Svg></TaskItem>
      <TaskItem $w={4} />
      <TaskItem $w={49} $active $open><OperaMark w={24} h={19} /></TaskItem>
      <TaskItem $w={48}><PageIcon w={18} h={17} /></TaskItem>
      <TaskItem $w={50}><Svg w={23} h={16}><path d="M0 1h8l2 2h13v12H0z" fill="#e9a621" /><path d="M0 5h23v10H0z" fill="#fbd567" /><path d="M4 16V9q0-1 1-1h13q1 0 1 1v7h-4v-4H8v4z" fill="#3b8fc9" /></Svg></TaskItem>
      <TaskItem $w={49}><Svg w={25} h={19}><ellipse cx="12.500" cy="9.500" rx="11.500" ry="8.800" stroke="#d51f48" strokeWidth="1.300" /><ellipse cx="12.500" cy="9.500" rx="6" ry="8.800" stroke="#d51f48" strokeWidth="1.200" /><ellipse cx="14" cy="9.500" rx="9" ry="8.500" stroke="#a51a3a" strokeWidth=".7" /></Svg></TaskItem>
      <TaskItem $w={50}><Svg w={25} h={20} vb="0 0 24 24"><path d="M17 0l7 3v18l-7 3L6.500 14.500 2 18l-2-1.200L4.500 12 0 7.200 2 6l4.500 3.500zM17 7l-6 5 6 5z" fill="#1a86d0" fillRule="evenodd" /><path d="M17 0l7 3v18l-7 3z" fill="#2fa4ee" /></Svg></TaskItem>
      <TaskItem $w={5} />
      <TaskItem $w={41} $open>
        <Svg w={22} h={18} vb="0 0 24 24"><circle cx="12" cy="12" r="12" fill="#fbc116" /><path d="M1.600 6A12 12 0 0 0 12 24l5.200-9L12 12z" fill="#2ba24c" /><path d="M12 6h10.400A12 12 0 0 0 1.600 6L7 15z" fill="#e33b2e" /><circle cx="12" cy="12" r="5.600" fill="#fff" /><circle cx="12" cy="12" r="4.400" fill="#4286f0" /></Svg>
      </TaskItem>
      <Spacer />
      <TaskItem $w={24}><Svg w={13} h={8}><path d="M.7 7L6.500 1l5.800 6" stroke="#ddd" strokeWidth="1.200" /></Svg></TaskItem>
      <TaskItem $w={25}><Svg w={14} h={12}><path d="M1 11C1 5 6 1 13 1M4 11c0-4 4-7 9-7M7 11c0-2.500 2.500-4.500 6-4.500M10 11c0-1.200 1.200-2 3-2" stroke="#ccc" strokeWidth="1.100" /></Svg></TaskItem>
      <TaskItem $w={24}><Svg w={17} h={11}><rect x="1" y="2" width="13" height="7" stroke="#eee" strokeWidth="1.300" /><path d="M2 3h4v5H2z" fill="#eee" /><ellipse cx="12" cy="7" rx="4.500" ry="4" fill="#1b9a34" /><path d="M12 4.500l1.500 2.500L12 9.500 10.500 7z" fill="#e9ffe9" /></Svg></TaskItem>
      <TaskItem $w={22}><Svg w={17} h={13}><path d="M1 4.500h2.500L7 1.500v10L3.500 8.500H1z" stroke="#ddd" strokeWidth="1.100" /><path d="M9 4.500q1.500 2 0 4M11.500 3q2.500 3.500 0 7M14 1.500q3.500 5 0 10" stroke="#ccc" strokeWidth="1.100" /></Svg></TaskItem>
      <TimeBox><Fit w={48} size={10} lh={14.5}>10:27 PM</Fit><Fit w={55} size={10} lh={14.5}>7/10/2020</Fit></TimeBox>
      <TaskItem $w={41}><Svg w={17} h={14}><path d="M1 1h15v10h-5L8.500 13.500 7 11H1z" stroke="#ddd" strokeWidth="1.200" /></Svg></TaskItem>
      <TaskItem $w={12}><Divider /></TaskItem>
    </Taskbar>
  );
}

export default function App() {
  return (
    <>
      <Global />
      <Screen>
        <Browser>
          <Sidebar />
          <Column>
            <Chrome />
            <View>
              <Content />
              <Scroll>
                <Svg w={8} h={5}><path d="M1 4.500L4 1.500l3 3" stroke="#555" strokeWidth="1.400" /></Svg>
                <Thumb />
                <Svg w={8} h={5}><path d="M1 .5l3 3 3-3" stroke="#555" strokeWidth="1.400" /></Svg>
              </Scroll>
            </View>
          </Column>
        </Browser>
        <WindowsBar />
      </Screen>
    </>
  );
}
